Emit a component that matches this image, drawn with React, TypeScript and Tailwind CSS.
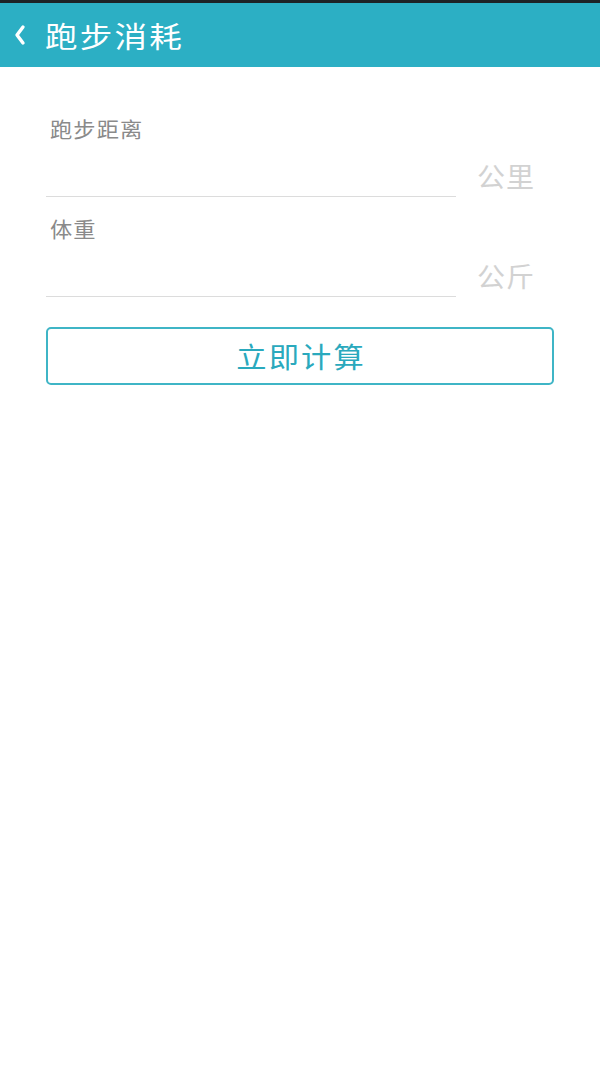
import React from "react";

const font = { fontFamily: '"Noto Sans CJK SC", "Noto Sans", sans-serif' };

function Field({ label, unit }: { label: string; unit: string }) {
  return (
    <div className="flex items-end">
      <div className="flex w-[410px] flex-col">
        <div className="h-[26px] pl-[4px] text-[21px] leading-[26px] text-[#8a8a8a]">
          <span className="inline-block origin-left scale-x-[1.06] tracking-[1px]">{label}</span>
        </div>
        <div className="h-[56px] border-b border-[#dcdcdc]" />
      </div>
      <div className="mb-[6px] ml-[21px] text-[27px] leading-[30px] text-[#d2d2d2]">
        <span className="inline-block origin-left scale-x-[1.04] tracking-[1px]">{unit}</span>
      </div>
    </div>
  );
}

export default function App() {
  return (
    <div className="min-h-[1067px] w-[600px] bg-white" style={font}>
      <div className="h-[3px] bg-[#1d2326]" />
      <div className="flex h-[64px] items-center bg-[#2cafc4]">
        <svg className="ml-[13px]" width="14" height="22" viewBox="0 0 14 22">
          <path d="M10 3 L4 11 L10 19" fill="none" stroke="white" strokeWidth="3.4" strokeLinecap="round" strokeLinejoin="round" />
        </svg>
        <div className="ml-[18px] text-[29px] leading-none text-white">
          <span className="inline-block origin-left scale-x-[1.12] tracking-[2px]">跑步消耗</span>
        </div>
      </div>
      <div className="px-[46px] pt-[48px]">
        <Field label="跑步距离" unit="公里" />
        <div className="h-[18px]" />
        <Field label="体重" unit="公斤" />
        <button className="mt-[30px] flex h-[58px] w-[508px] items-center justify-center rounded-[5px] border-2 border-[#3fb5c6] bg-white text-[28px] text-[#2aa9bd]">
          <span className="inline-block scale-x-[1.08] pl-[2px] tracking-[2px]">立即计算</span>
        </button>
      </div>
    </div>
  );
}
